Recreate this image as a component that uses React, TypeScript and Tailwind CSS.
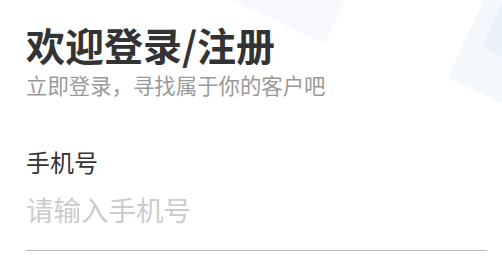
export default function App() {
  return (
    <div
      className="relative w-[502px] h-[270px] overflow-hidden bg-white"
      style={{ fontFamily: '"Noto Sans CJK SC", "Noto Sans", sans-serif' }}
    >
      {/* decorative tilted squares */}
      <div className="absolute left-[206px] top-[-143px] w-[160px] h-[160px] rotate-[25deg] bg-[#f6f8fc]" />
      <div className="absolute left-[474px] top-[-41px] w-[160px] h-[160px] rotate-[25deg] bg-[#f4f7fc]" />
      <div className="absolute left-[508px] top-[-72px] w-[160px] h-[160px] rotate-[25deg] bg-[#ebf1fa]" />

      <div className="relative flex flex-col px-[26px] pt-[23px]">
        <h1 className="text-[39px] leading-[43px] font-bold text-[#333333]">欢迎登录/注册</h1>
        <p className="mt-[6px] text-[21.4px] leading-[26px] text-[#999999]">立即登录，寻找属于你的客户吧</p>

        <label className="mt-[49px] text-[24px] leading-[30px] text-[#333333]">手机号</label>
        <input
          className="mt-[13px] w-[461px] h-[38px] text-[27.5px] leading-[38px] text-[#333333] placeholder:text-[#cccccc] outline-none bg-transparent"
          placeholder="请输入手机号"
        />
        <div className="mt-[22px] w-[461px] h-px bg-[#bbbbbb]" />
      </div>
    </div>
  );
}
